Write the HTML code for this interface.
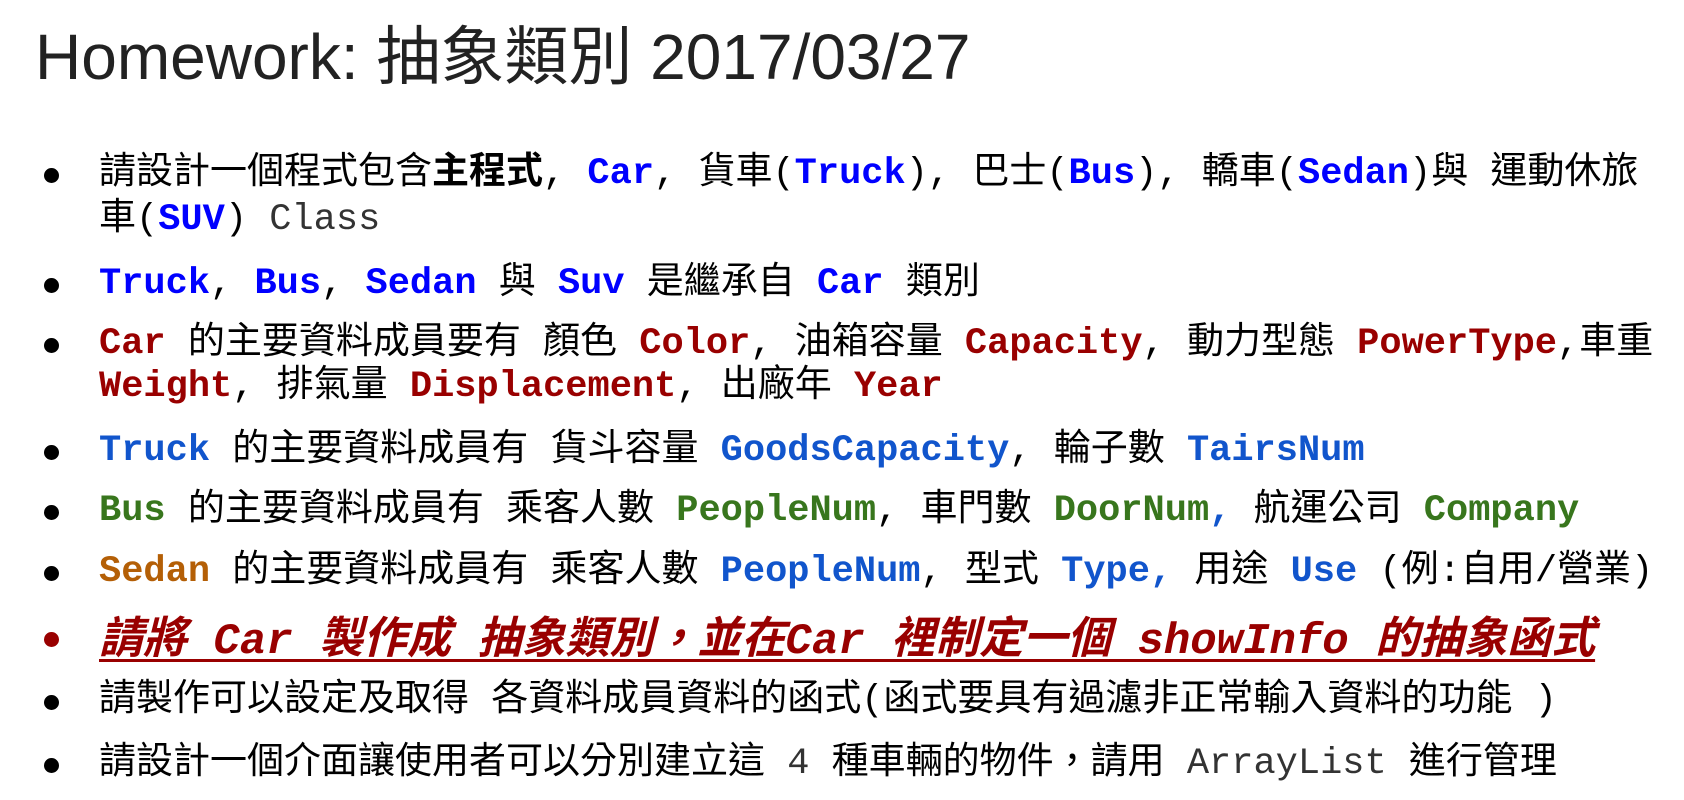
<!DOCTYPE html>
<html><head><meta charset="utf-8"><style>
html,body{margin:0;padding:0;background:#fff;width:1684px;height:800px;overflow:hidden}
body{position:relative;font-family:"Liberation Mono","Noto Sans CJK TC",monospace;color:#000}
.t{position:absolute;left:35px;top:17px;font-size:64px;color:#222;white-space:pre;line-height:80px;font-family:"Liberation Sans","Noto Sans CJK TC",sans-serif}
.l{position:absolute;left:99px;font-size:37px;line-height:47px;white-space:pre}
.b{position:absolute;left:44px;width:15px;height:15px;border-radius:50%;background:#000}
.m{font-weight:bold}
.n{color:#333}
.bl{color:#0000ff}.rd{color:#990000}.db{color:#1155cc}.gr{color:#38761d}.or{color:#b45f06}
.k{font-weight:bold}
.it{font-size:44px;font-style:italic;font-weight:bold;color:#990000;text-decoration:underline;text-decoration-thickness:3px;text-underline-offset:6px}
</style></head><body>
<div class="t">Homework: 抽象類別 2017/03/27</div>

<div class="b" style="top:168px"></div>
<div class="l" style="top:151px">請設計一個程式包含<span class="k">主程式</span>, <span class="m bl">Car</span>, 貨車(<span class="m bl">Truck</span>), 巴士(<span class="m bl">Bus</span>), 轎車(<span class="m bl">Sedan</span>)與 運動休旅</div>
<div class="l" style="top:197px">車(<span class="m bl">SUV</span>) <span class="n">Class</span></div>

<div class="b" style="top:278px"></div>
<div class="l" style="top:261px"><span class="m bl">Truck</span>, <span class="m bl">Bus</span>, <span class="m bl">Sedan</span> 與 <span class="m bl">Suv</span> 是繼承自 <span class="m bl">Car</span> 類別</div>

<div class="b" style="top:338px"></div>
<div class="l" style="top:321px"><span class="m rd">Car</span> 的主要資料成員要有 顏色 <span class="m rd">Color</span>, 油箱容量 <span class="m rd">Capacity</span>, 動力型態 <span class="m rd">PowerType</span>,車重</div>
<div class="l" style="top:364px"><span class="m rd">Weight</span>, 排氣量 <span class="m rd">Displacement</span>, 出廠年 <span class="m rd">Year</span></div>

<div class="b" style="top:445px"></div>
<div class="l" style="top:428px"><span class="m db">Truck</span> 的主要資料成員有 貨斗容量 <span class="m db">GoodsCapacity</span>, 輪子數 <span class="m db">TairsNum</span></div>

<div class="b" style="top:505px"></div>
<div class="l" style="top:488px"><span class="m gr">Bus</span> 的主要資料成員有 乘客人數 <span class="m gr">PeopleNum</span>, 車門數 <span class="m gr">DoorNum</span><span class="m db">,</span> 航運公司 <span class="m gr">Company</span></div>

<div class="b" style="top:566px"></div>
<div class="l" style="top:549px"><span class="m or">Sedan</span> 的主要資料成員有 乘客人數 <span class="m db">PeopleNum</span>, 型式 <span class="m db">Type,</span> 用途 <span class="m db">Use</span> (例:自用/營業)</div>

<div class="b" style="top:632px;background:#990000"></div>
<div class="l it" style="top:615px;line-height:54px">請將 Car 製作成 抽象類別，並在Car 裡制定一個 showInfo 的抽象函式</div>

<div class="b" style="top:695px"></div>
<div class="l" style="top:678px">請製作可以設定及取得 各資料成員資料的函式(函式要具有過濾非正常輸入資料的功能 )</div>

<div class="b" style="top:758px"></div>
<div class="l" style="top:741px">請設計一個介面讓使用者可以分別建立這 <span class="n">4</span> 種車輛的物件，請用 <span class="n">ArrayList</span> 進行管理</div>
</body></html>
